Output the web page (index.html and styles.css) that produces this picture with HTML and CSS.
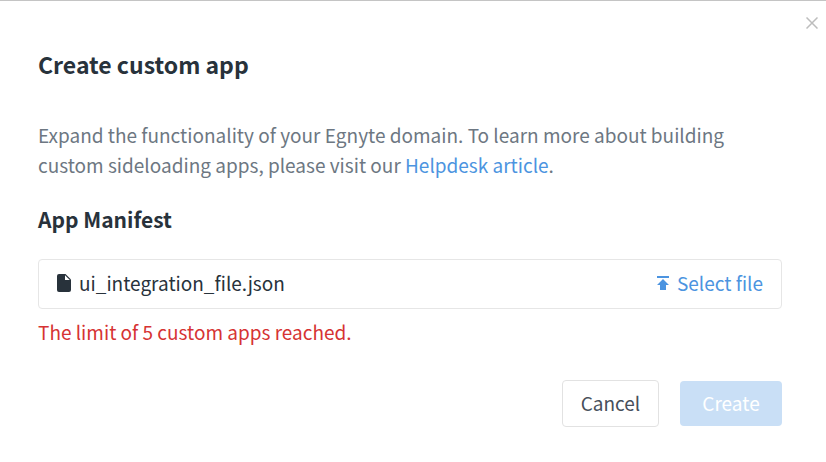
FILE: index.html
```html
<!DOCTYPE html>
<html lang="en">
<head>
<meta charset="utf-8">
<title>Create custom app</title>
<link rel="stylesheet" href="styles.css">
</head>
<body>

<div class="dialog" role="dialog" aria-labelledby="dialog-title">
    <button class="close" type="button" aria-label="Close">
        <svg width="12" height="12" viewBox="0 0 12 12"><path d="M0.5 0.5L11.5 11.5M11.5 0.5L0.5 11.5"/></svg>
    </button>

    <h1 id="dialog-title">Create custom app</h1>
    <p class="intro">Expand the functionality of your Egnyte domain. To learn more about building custom sideloading apps, please visit our <a href="#">Helpdesk article</a>.</p>

    <h2>App Manifest</h2>
    <div class="file-field">
        <svg class="file-icon" width="14" height="18" viewBox="0 0 14 18"><path d="M2 0H8.5L14 5.5V16a2 2 0 0 1-2 2H2a2 2 0 0 1-2-2V2a2 2 0 0 1 2-2z"/><path class="fold" d="M8 1.2V6h4.8z"/></svg>
        <span class="file-name">ui_integration_file.json</span>
        <button class="select-file" type="button">
            <svg width="12" height="14" viewBox="0 0 12 14"><path d="M0 0H12V2H0zM6 3L12 9H9V14H3V9H0z"/></svg>
            Select file
        </button>
    </div>
    <p class="error">The limit of 5 custom apps reached.</p>

    <div class="actions">
        <button class="cancel" type="button">Cancel</button>
        <button class="create" type="button" disabled>Create</button>
    </div>
</div>

</body>
</html>
```
FILE: styles.css
```css
* {
    box-sizing: border-box;
}

body {
    margin: 0;
    background: #fff;
    color: #28323b;
    font-family: "Noto Sans CJK SC", "Noto Sans", sans-serif;
    font-size: 19px;
    line-height: 30px;
}

h1, h2, p {
    margin: 0;
}

h1 {
    font-size: 23px;
    font-weight: bold;
}

h2 {
    margin-top: 24px;
    font-size: 21px;
    font-weight: bold;
}

a {
    color: #4c94e0;
    text-decoration: none;
}

button {
    padding: 0;
    border: none;
    background: none;
    color: inherit;
    font: inherit;
}

.dialog {
    position: relative;
    padding: 48px 44px 34px 38px;
    border-top: 1px solid #c4c4c4;
}

.close {
    position: absolute;
    top: 16px;
    right: 8px;
    display: flex;
}

.close svg {
    stroke: #bdbdbd;
    stroke-width: 1.5;
}

.intro {
    margin-top: 41px;
    color: #6d7782;
}

.file-field {
    display: flex;
    align-items: center;
    height: 50px;
    margin-top: 25px;
    padding: 0 18px 2px;
    border: 1px solid #e6e6e6;
    border-radius: 4px;
}

.file-icon {
    margin-right: 8px;
    fill: #28323b;
}

.file-icon .fold {
    fill: #fff;
}

.file-name {
    flex: 1;
}

.select-file {
    display: flex;
    align-items: center;
    gap: 8px;
    color: #4c94e0;
}

.select-file svg {
    fill: #4c94e0;
}

.error {
    margin-top: 8px;
    color: #d63333;
}

.actions {
    display: flex;
    align-items: center;
    justify-content: flex-end;
    gap: 21px;
    margin-top: 33px;
}

.cancel,
.create {
    padding-bottom: 2px;
    border-radius: 4px;
}

.cancel {
    width: 97px;
    height: 47px;
    border: 1px solid #e2e2e2;
    color: #474f5b;
}

.create {
    width: 102px;
    height: 45px;
    background: #c9dff6;
    color: #fff;
}
```
